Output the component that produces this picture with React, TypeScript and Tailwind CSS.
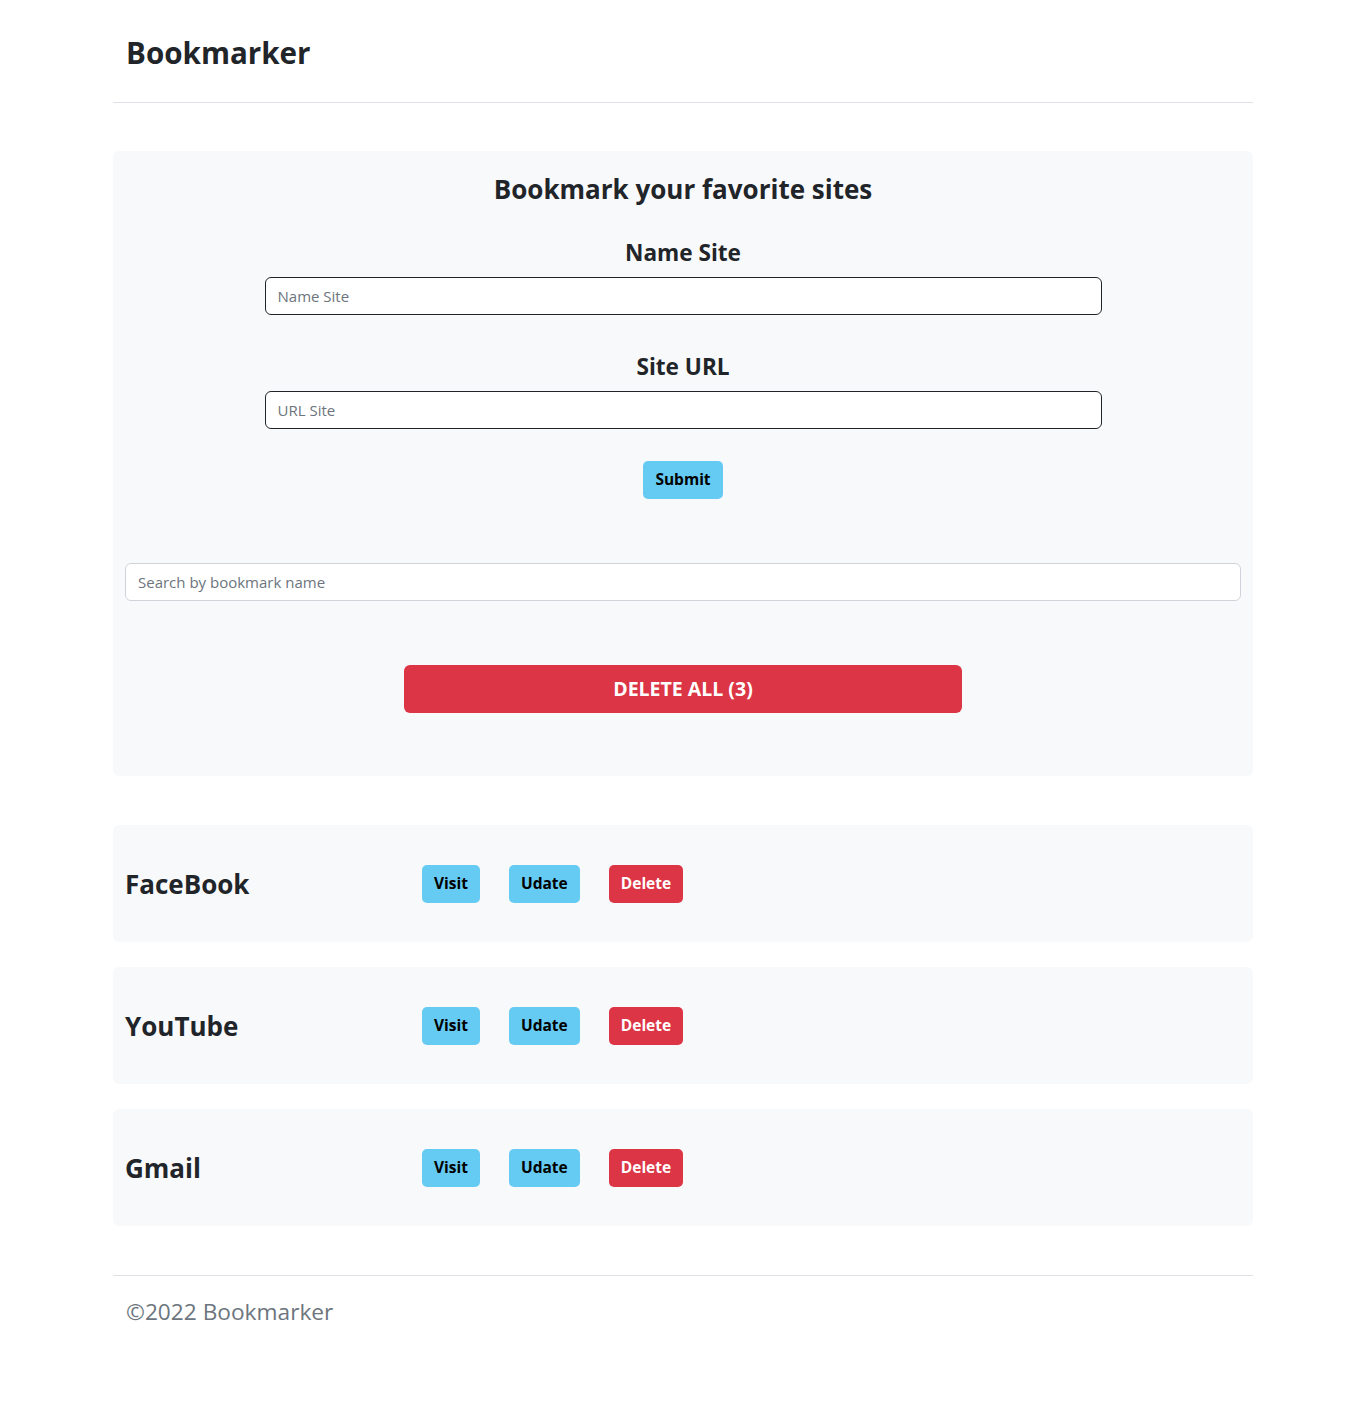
import React from "react";

const font = { fontFamily: '"Open Sans", "Noto Sans", sans-serif' };

function Row({ name }: { name: string }) {
  return (
    <div className="flex h-[117px] items-center rounded-md bg-[#f8f9fa] px-3">
      <div className="w-[297px] text-[26px] font-bold leading-[34px] text-[#212529]">{name}</div>
      <div className="flex items-center gap-[29px]">
        <button className="h-[38px] rounded-[5px] bg-[#66cbf2] px-3 text-[15.5px] font-bold text-black">Visit</button>
        <button className="h-[38px] rounded-[5px] bg-[#66cbf2] px-3 text-[15.5px] font-bold text-black">Udate</button>
        <button className="h-[38px] rounded-[5px] bg-[#dc3545] px-3 text-[15.5px] font-bold text-white">Delete</button>
      </div>
    </div>
  );
}

export default function App() {
  return (
    <div className="min-h-[1408px] bg-white text-[#212529]" style={font}>
      <div className="mx-auto w-[1140px]">
        <header className="flex h-[103px] items-center border-b border-[#dee2e6] px-[13px] pt-[3px]">
          <h1 className="text-[29.6px] font-bold leading-[38px]">Bookmarker</h1>
        </header>

        <section className="mt-[48px] flex h-[625px] flex-col items-center rounded-md bg-[#f8f9fa] px-3 pt-[21px]">
          <h2 className="h-[34px] text-[26px] font-bold leading-[34px]">Bookmark your favorite sites</h2>
          <label className="mt-[32px] h-[29px] text-[22.6px] font-bold leading-[29px]">Name Site</label>
          <input
            placeholder="Name Site"
            className="mt-[9.5px] h-[38px] w-[837px] rounded-[6px] border border-[#212529] bg-white px-3 text-[15px] text-[#212529] placeholder:text-[#6c757d]"
          />
          <label className="mt-[37.5px] h-[29px] text-[22.6px] font-bold leading-[29px]">Site URL</label>
          <input
            placeholder="URL Site"
            className="mt-[9.5px] h-[38px] w-[837px] rounded-[6px] border border-[#212529] bg-white px-3 text-[15px] text-[#212529] placeholder:text-[#6c757d]"
          />
          <button className="mt-[32px] h-[38px] w-[80px] rounded-[5px] bg-[#66cbf2] text-[15.5px] font-bold text-black">Submit</button>
          <input
            placeholder="Search by bookmark name"
            className="mt-[64px] h-[38px] w-full rounded-[6px] border border-[#ced4da] bg-white px-3 text-[15px] text-[#212529] placeholder:text-[#6c757d]"
          />
          <button className="mt-[64px] h-[48px] w-[558px] rounded-[6px] bg-[#dc3545] text-[19.5px] font-bold text-white">DELETE ALL (3)</button>
        </section>

        <div className="mt-[49px] flex flex-col gap-[25px]">
          <Row name="FaceBook" />
          <Row name="YouTube" />
          <Row name="Gmail" />
        </div>

        <footer className="mt-[49px] border-t border-[#dee2e6] px-[13px] pt-[22px]">
          <p className="text-[22.7px] leading-[27px] text-[#6c757d]">©2022 Bookmarker</p>
        </footer>
      </div>
    </div>
  );
}
